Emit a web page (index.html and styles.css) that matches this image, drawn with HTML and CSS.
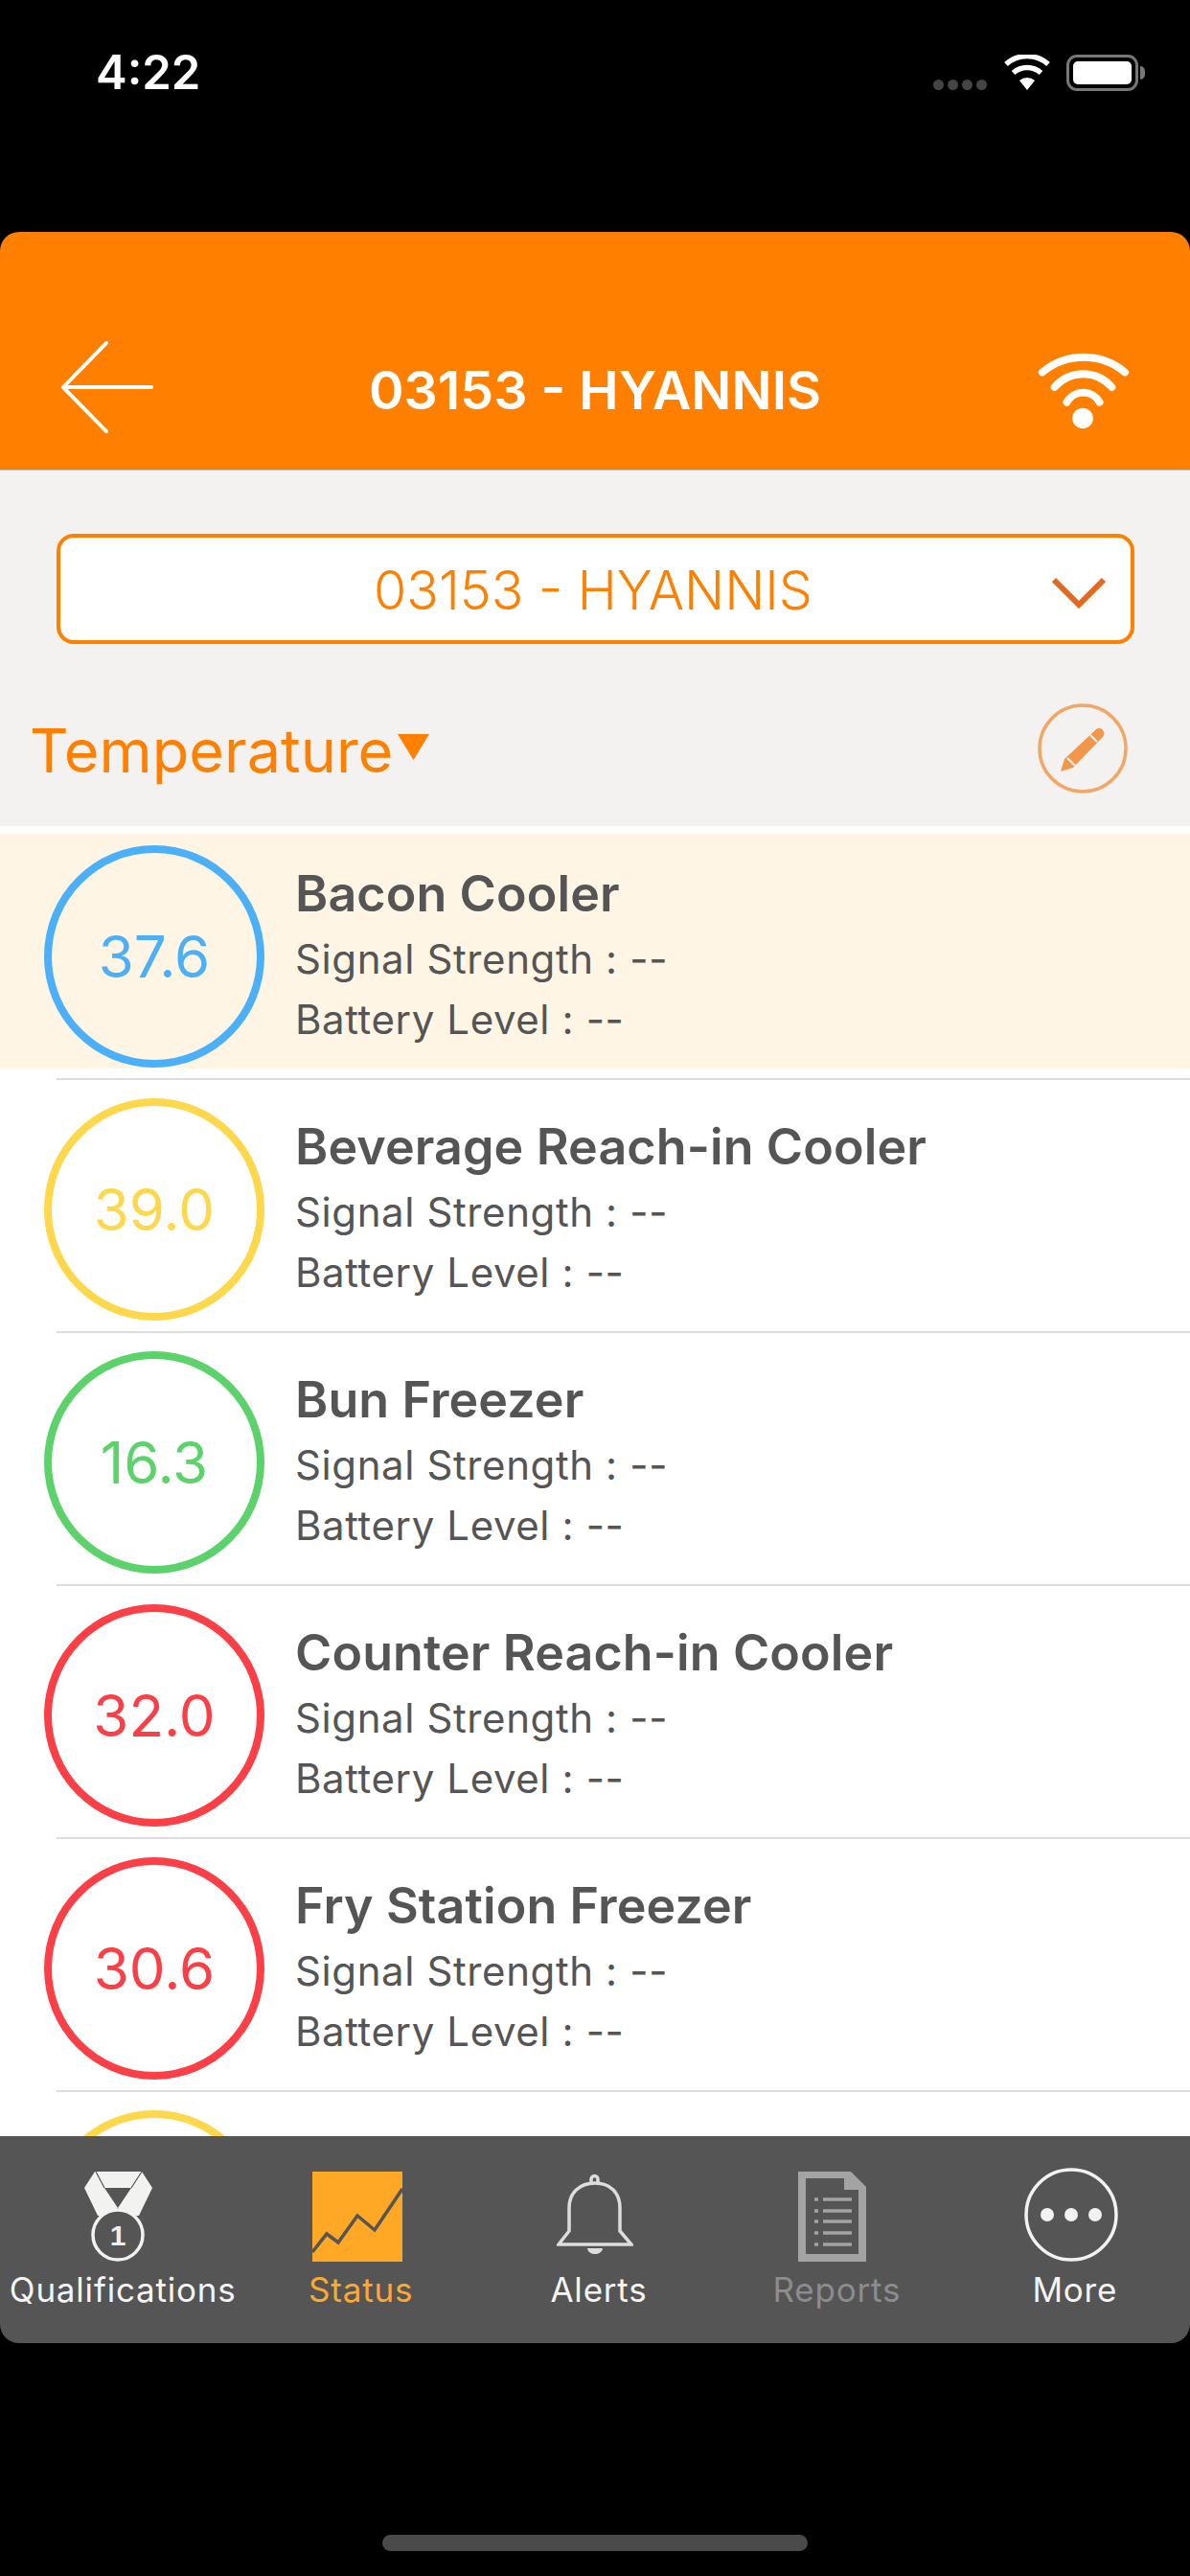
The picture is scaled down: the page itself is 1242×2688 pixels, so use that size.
FILE: index.html
```html
<!DOCTYPE html>
<html lang="en">
<head>
<meta charset="utf-8">
<title>03153 - HYANNIS</title>
<link rel="stylesheet" href="styles.css">
</head>
<body>
<div class="screen">
  <div class="statusbar">
    <span class="clock">4:22</span>
    <div class="status-icons">
      <div class="signal"><i></i><i></i><i></i><i></i></div>
      <svg class="status-wifi" viewBox="0 0 50 37"><path d="M25 37 17 27a12 12 0 0 1 16 0Z" fill="#fff"/><path d="M10.500 19a22 22 0 0 1 29 0" fill="none" stroke="#fff" stroke-width="5.500"/><path d="M3 10a33 33 0 0 1 44 0" fill="none" stroke="#fff" stroke-width="5.500"/></svg>
      <div class="battery"><div class="battery-fill"></div></div>
      <div class="battery-cap"></div>
    </div>
  </div>

  <header class="topbar">
    <svg class="back" viewBox="0 0 100 100"><path d="M49 2 3 49l46 47M3 49h94" fill="none" stroke="#fff" stroke-width="4" stroke-linecap="round" stroke-linejoin="round"/></svg>
    <h1 class="topbar-title">03153 - HYANNIS</h1>
    <svg class="link-icon" viewBox="0 0 100 84"><path d="M6 22A68.500 68.500 0 0 1 94 22M19 38A40 40 0 0 1 80 38M32 54A20 20 0 0 1 67 54" fill="none" stroke="#fff" stroke-width="8" stroke-linecap="round"/><circle cx="49" cy="71" r="11" fill="#fff"/></svg>
  </header>

  <section class="filters">
    <div class="picker">
      <span class="picker-text">03153 - HYANNIS</span>
      <svg class="picker-arrow" viewBox="0 0 56 34"><path d="M2 3l26 26L54 3" fill="none" stroke="#e26a20" stroke-width="6"/></svg>
    </div>
    <div class="metric-row">
      <div class="metric">
        <span class="metric-name">Temperature</span>
        <svg class="metric-caret" viewBox="0 0 35 28"><path d="M1 1h33L17.500 28Z" fill="#ff7f00"/></svg>
      </div>
      <svg class="edit" viewBox="0 0 94 94"><circle cx="47" cy="47" r="45" fill="none" stroke="#f3a765" stroke-width="3.500"/><path d="M24 71l4-13 32-30c3-3 6-3 8 0s2 5-1 8L37 67Z" fill="#f2974a"/><path d="M31 57l8 8M55 33l7 7" stroke="#f3f2f0" stroke-width="2"/></svg>
    </div>
  </section>

  <main class="list">
    <article class="sensor sensor-selected">
      <div class="dial dial-blue">37.6</div>
      <div class="sensor-info">
        <div class="sensor-name">Bacon Cooler</div>
        <div class="sensor-line">Signal Strength : --</div>
        <div class="sensor-line">Battery Level : --</div>
      </div>
    </article>
    <div class="divider"></div>
    <article class="sensor">
      <div class="dial dial-yellow">39.0</div>
      <div class="sensor-info">
        <div class="sensor-name">Beverage Reach-in Cooler</div>
        <div class="sensor-line">Signal Strength : --</div>
        <div class="sensor-line">Battery Level : --</div>
      </div>
    </article>
    <div class="divider"></div>
    <article class="sensor">
      <div class="dial dial-green">16.3</div>
      <div class="sensor-info">
        <div class="sensor-name">Bun Freezer</div>
        <div class="sensor-line">Signal Strength : --</div>
        <div class="sensor-line">Battery Level : --</div>
      </div>
    </article>
    <div class="divider"></div>
    <article class="sensor">
      <div class="dial dial-red">32.0</div>
      <div class="sensor-info">
        <div class="sensor-name">Counter Reach-in Cooler</div>
        <div class="sensor-line">Signal Strength : --</div>
        <div class="sensor-line">Battery Level : --</div>
      </div>
    </article>
    <div class="divider"></div>
    <article class="sensor">
      <div class="dial dial-red">30.6</div>
      <div class="sensor-info">
        <div class="sensor-name">Fry Station Freezer</div>
        <div class="sensor-line">Signal Strength : --</div>
        <div class="sensor-line">Battery Level : --</div>
      </div>
    </article>
    <div class="divider"></div>
    <article class="sensor">
      <div class="dial dial-yellow"></div>
    </article>
  </main>

  <nav class="tabbar">
    <div class="tab">
      <svg class="tab-icon" viewBox="0 0 72 94"><path d="M11 0h49l11 17-14 29H46l-11-8-11 8H14L0 17Z M21 17h28L35 38Z" fill="#f2f2f1" fill-rule="evenodd"/><path d="M12 0l9 17M60 0l-11 17" fill="none" stroke="#555" stroke-width="1.200"/><circle cx="35" cy="66" r="26" fill="#555" stroke="#f2f2f1" stroke-width="3.500"/><text class="medal-rank" x="35" y="77" text-anchor="middle">1</text></svg>
      <span class="tab-label">Qualifications</span>
    </div>
    <div class="tab tab-active">
      <svg class="tab-icon" viewBox="0 0 94 94"><rect width="94" height="94" fill="#fea826"/><path d="M0 84l15-19 12 9 20-28 18 15 29-43" fill="none" stroke="#555" stroke-width="3.500"/></svg>
      <span class="tab-label">Status</span>
    </div>
    <div class="tab">
      <svg class="tab-icon" viewBox="0 0 80 94"><path d="M36 12V8a3.500 3.500 0 0 1 7 0v4M2 76l11-14V38C13 22 24 12 40 12s26 10 26 26v24l12 14Z" fill="none" stroke="#ddd" stroke-width="3.500"/><path d="M32 80h16c-1 8-15 8-16 0Z" fill="#ddd"/></svg>
      <span class="tab-label">Alerts</span>
    </div>
    <div class="tab tab-off">
      <svg class="tab-icon" viewBox="0 0 72 94"><path d="M0 0h55l16 16v78H0Z M8 7v79h55V19H48V7Z" fill="#a3a3a3" fill-rule="evenodd"/><path d="M26 29h30M26 41h30M26 52h30M26 64h30M26 76h30M17 29h4M17 41h4M17 52h4M17 64h4M17 76h4" stroke="#a3a3a3" stroke-width="3.500"/></svg>
      <span class="tab-label">Reports</span>
    </div>
    <div class="tab">
      <svg class="tab-icon" viewBox="0 0 98 98"><circle cx="49" cy="49" r="47" fill="none" stroke="#f2f2f2" stroke-width="3.500"/><circle cx="24" cy="49" r="7" fill="#f2f2f2"/><circle cx="49" cy="49" r="7" fill="#f2f2f2"/><circle cx="74" cy="49" r="7" fill="#f2f2f2"/></svg>
      <span class="tab-label">More</span>
    </div>
  </nav>

  <div class="home-zone"><div class="home-bar"></div></div>
</div>
</body>
</html>
```
FILE: styles.css
```css
* { box-sizing: border-box; }

html, body {
  margin: 0;
  background: #000;
}

.screen {
  width: 1242px;
  height: 2688px;
  display: flex;
  flex-direction: column;
  overflow: hidden;
  font-family: Inter, "Liberation Sans", Arial, sans-serif;
  color: #555;
}

/* Device status row */
.statusbar {
  height: 242px;
  flex: none;
  display: flex;
  justify-content: space-between;
  align-items: flex-start;
  padding: 50px 47px 0 100px;
  color: #fff;
}

.clock {
  font-size: 49px;
  line-height: 52px;
  font-weight: 600;
}

.status-icons {
  display: flex;
  align-items: flex-start;
  padding-top: 7px;
}

.signal {
  display: flex;
  gap: 4px;
  margin-top: 26px;
  margin-right: 17px;
}

.signal i {
  width: 11px;
  height: 11px;
  border-radius: 50%;
  background: #444;
}

.status-wifi {
  width: 50px;
  height: 37px;
  margin-right: 16px;
}

.battery {
  width: 75px;
  height: 38px;
  padding: 4px;
  border: 3px solid #777;
  border-radius: 11px;
}

.battery-fill {
  height: 100%;
  background: #fff;
  border-radius: 5px;
}

.battery-cap {
  width: 5px;
  height: 14px;
  margin: 12px 0 0 2px;
  border-radius: 0 5px 5px 0;
  background: #777;
}

/* Orange title bar */
.topbar {
  height: 249px;
  flex: none;
  position: relative;
  background: #ff8000;
  border-radius: 20px 20px 0 0;
  border-bottom: 1px solid #b9c0c6;
  color: #fff;
}

.back {
  position: absolute;
  left: 62px;
  top: 114px;
  width: 100px;
  height: 98px;
}

.topbar-title {
  position: absolute;
  left: 0;
  right: 0;
  top: 132px;
  margin: 0;
  text-align: center;
  font-size: 55.5px;
  line-height: 66px;
  font-weight: 600;
}

.link-icon {
  position: absolute;
  left: 1082px;
  top: 124px;
  width: 98px;
  height: 84px;
}

/* Site picker and metric selector */
.filters {
  height: 371px;
  flex: none;
  background: #f3f2f0;
  padding: 66px 0 0 0;
}

.picker {
  position: relative;
  width: 1125px;
  height: 115px;
  margin-left: 59px;
  border: 4px solid #ff8000;
  border-radius: 18px;
  background: #fff;
  display: flex;
  align-items: center;
  justify-content: center;
  padding: 2px 5px 0 0;
}

.picker-text {
  font-size: 55.5px;
  font-weight: 300;
  color: #ff8000;
}

.picker-arrow {
  position: absolute;
  right: 26px;
  top: 41px;
  width: 56px;
  height: 34px;
}

.metric-row {
  display: flex;
  align-items: center;
  justify-content: space-between;
  padding: 62px 65px 0 31px;
}

.metric {
  display: flex;
  align-items: center;
}

.metric-name {
  margin-top: 4px;
  font-size: 63px;
  line-height: 74px;
  color: #ff8000;
}

.metric-caret {
  width: 35px;
  height: 28px;
  margin: 0 0 4px 4px;
}

.edit {
  width: 94px;
  height: 94px;
}

/* Sensor list */
.list {
  height: 1367px;
  flex: none;
  background: #fff;
  padding-top: 8px;
  overflow: hidden;
}

.sensor {
  height: 245px;
  display: flex;
  padding: 12px 0 0 46px;
}

.sensor-selected {
  background: #fff5e5;
}

.divider {
  height: 2px;
  margin: 10px 0 7px 59px;
  background: #ddd;
}

.dial {
  width: 230px;
  height: 232px;
  flex: none;
  display: flex;
  align-items: center;
  justify-content: center;
  border: 8px solid;
  border-radius: 50%;
  font-size: 60px;
}

.dial-blue { color: #4bb0f7; }
.dial-yellow { color: #fdd84d; }
.dial-green { color: #5bd26a; }
.dial-red { color: #fb3f46; }

.sensor-info {
  padding: 20px 0 0 32px;
}

.sensor-name {
  font-size: 52px;
  line-height: 62px;
  font-weight: 600;
  letter-spacing: 0.1px;
}

.sensor-line {
  font-size: 42px;
  line-height: 63px;
  letter-spacing: 0.6px;
}

.sensor-name + .sensor-line {
  margin-top: 5px;
}

/* Bottom tabs */
.tabbar {
  height: 216px;
  flex: none;
  display: grid;
  grid-template-columns: repeat(5, 1fr);
  background: #555;
  border-radius: 0 0 20px 20px;
}

.tab {
  display: flex;
  flex-direction: column;
  align-items: center;
  color: #f4f4f4;
}

.tab-icon {
  height: 94px;
  margin-top: 37px;
  flex: none;
}

.tab:last-child .tab-icon {
  height: 98px;
  margin-top: 33px;
}

.tab-label {
  padding-left: 8px;
  margin-top: 7px;
  font-size: 35px;
  line-height: 44px;
  letter-spacing: 0.8px;
  white-space: nowrap;
}

.tab-active { color: #fca92f; }
.tab-off { color: #8c8c8c; }

.medal-rank {
  font-family: "Liberation Sans", sans-serif;
  font-size: 30px;
  font-weight: 700;
  fill: #eee;
}

/* Home indicator */
.home-zone {
  flex: 1;
  display: flex;
  justify-content: center;
  padding-top: 200px;
}

.home-bar {
  width: 444px;
  height: 17px;
  border-radius: 9px;
  background: #4a4a4a;
}
```
